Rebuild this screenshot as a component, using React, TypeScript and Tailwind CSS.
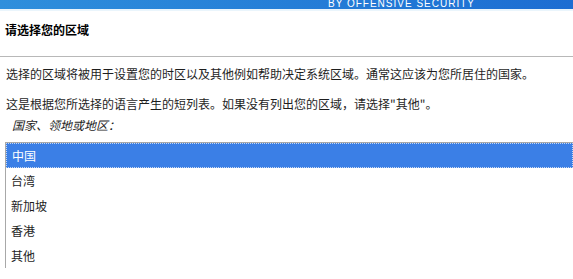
const regions = ["中国", "台湾", "新加坡", "香港", "其他"]

export default function App() {
  return (
    <div
      className="w-[573px] h-[279px] overflow-hidden bg-white text-[#1e1e1e]"
      style={{ fontFamily: '"Noto Sans CJK SC", "Noto Sans", sans-serif' }}
    >
      {/* banner */}
      <div className="h-[9px] overflow-hidden flex items-end pl-[328px] bg-gradient-to-r from-[#2f8fdc] to-[#1d6dd2]">
        <span className="text-[10px] leading-[11px] tracking-[1px] text-white font-[Liberation_Sans]">
          BY OFFENSIVE SECURITY
        </span>
      </div>
      <div className="h-[2px] bg-[#eaf5fc]" />

      {/* title */}
      <div className="h-[46px] flex items-center pb-[8px] px-[5px] border-b border-[#b8b8b8]">
        <h1 className="text-[12px] font-bold text-black">请选择您的区域</h1>
      </div>

      <div className="pt-[8px]">
        <p className="px-[6px] text-[12px] leading-[18px]">
          选择的区域将被用于设置您的时区以及其他例如帮助决定系统区域。通常这应该为您所居住的国家。
        </p>
        <p className="px-[6px] mt-[12px] text-[12px] leading-[18px]">
          这是根据您所选择的语言产生的短列表。如果没有列出您的区域，请选择"其他"。
        </p>
        <p className="px-[12px] mt-[3px] text-[12px] leading-[18px] italic">国家、领地或地区：</p>

        <div className="ml-[5px] mt-[8px] border-t border-l border-[#a8a8a8]">
          {regions.map((r, i) => (
            <div
              key={r}
              className={
                i === 0
                  ? "h-[25px] flex items-center pl-[5px] text-[12px] text-white bg-[#3b7fe6] border border-dotted border-[#c8d8f0]"
                  : "h-[25px] flex items-center pl-[5px] text-[12px] text-[#1e1e1e]"
              }
            >
              {r}
            </div>
          ))}
        </div>
      </div>
    </div>
  )
}
